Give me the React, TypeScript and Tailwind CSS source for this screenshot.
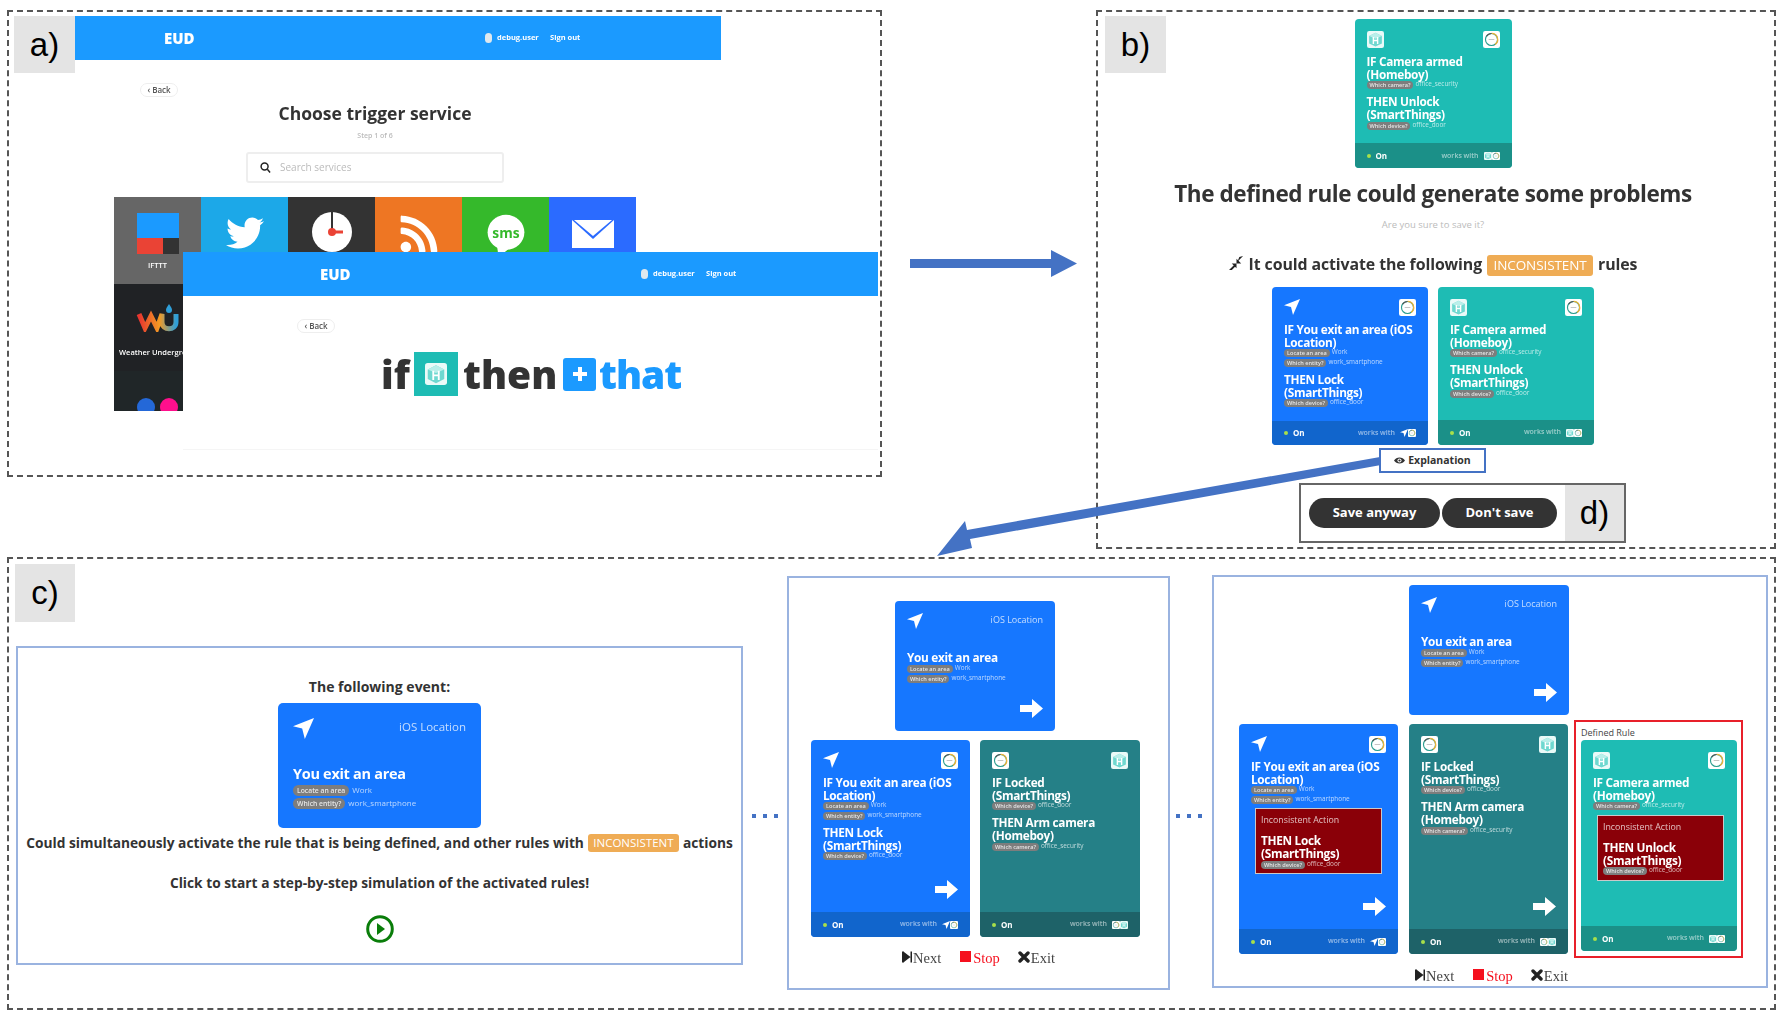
import React from 'react';
import { FaTwitter, FaRss } from 'react-icons/fa';

const LocationArrow: React.FC<{ className?: string }> = ({ className }) => (
  <svg viewBox="0 0 24 24" className={className}>
    <path d="M24 0 L0 9.5 L10.5 12 L13.5 24 Z" fill="#fff" />
  </svg>
);

// SmartThings style ring on a white tile
const RingIcon: React.FC<{ className?: string }> = ({ className }) => (
  <svg viewBox="0 0 24 24" className={className}>
    <rect width="24" height="24" rx="3" fill="#fff" />
    <circle cx="12" cy="12" r="8.5" fill="none" stroke="#2a9d8f" strokeWidth="1.6" />
    <path d="M12 3.5 A8.5 8.5 0 0 1 17 19" fill="none" stroke="#e8b23a" strokeWidth="1.8" />
    <path d="M5 7.5 A8.5 8.5 0 0 1 12 3.5" fill="none" stroke="#555" strokeWidth="1.6" />
    <rect x="8" y="11.4" width="8" height="1.2" fill="#bbb" />
  </svg>
);

// Homeboy cube logo
const CubeIcon: React.FC<{ className?: string }> = ({ className }) => (
  <svg viewBox="0 0 24 24" className={className}>
    <rect width="24" height="24" rx="3" fill="#eafaf8" />
    <path d="M12 2.5 L21 7 V17.5 L12 22 L3 17.5 V7 Z" fill="#6fd8d0" />
    <path d="M12 2.5 L21 7 L12 11 L3 7 Z" fill="#b9efea" />
    <path d="M8 8.5 H10 V12.5 H14 V8.5 H16 V18.5 H14 V14.5 H10 V18.5 H8 Z" fill="#fff" />
  </svg>
);

const ArrowRight: React.FC = () => (
  <svg viewBox="0 0 23 19" className="w-[23px] h-[19px]">
    <path d="M0 6 H12 V0 L23 9.5 L12 19 V13 H0 Z" fill="#fff" />
  </svg>
);

const Chip: React.FC<{ label: string; value: string }> = ({ label, value }) => (
  <div className="flex items-start h-[9.5px] whitespace-nowrap">
    <span className="h-[8px] mt-[1px] rounded-full bg-[#7d7d7d] px-[3px] text-[5.6px] leading-[8px] text-white/80 font-semibold">{label}</span>
    <span className="ml-[2px] text-[6.4px] leading-[8px] text-white/70">{value}</span>
  </div>
);

interface Block {
  lines: string[];
  params: [string, string][];
  inconsistent?: boolean;
}

const RuleBlock: React.FC<{ block: Block; first?: boolean }> = ({ block, first }) => {
  const body = (
    <>
      <div className="text-[11.8px] leading-[12.7px] tracking-[-0.3px] font-bold text-white">
        {block.lines.map(l => (
          <div key={l} className="whitespace-nowrap">{l}</div>
        ))}
      </div>
      <div>
        {block.params.map(p => (
          <Chip key={p[0]} label={p[0]} value={p[1]} />
        ))}
      </div>
    </>
  );
  if (block.inconsistent) {
    return (
      <div className="mt-[4px] ml-[4px] w-[127px] h-[66px] border border-[#c9c9c9] bg-[#8a0008] px-[5px] pt-[6px]">
        <div className="text-[8.8px] leading-[11px] text-white/75 mb-[8px]">Inconsistent Action</div>
        {body}
      </div>
    );
  }
  return <div className={first ? '' : 'mt-[5.5px]'}>{body}</div>;
};

const themes = {
  blue: { card: 'bg-[#1677ff]', foot: 'bg-[#1165cc]' },
  teal: { card: 'bg-[#1ebcb4]', foot: 'bg-[#1b9088]' },
  dark: { card: 'bg-[#258087]', foot: 'bg-[#1e6268]' },
};

type IconName = 'loc' | 'ring' | 'cube';

const TopIcon: React.FC<{ name: IconName }> = ({ name }) => {
  if (name === 'loc') return <LocationArrow className="w-[16px] h-[16px]" />;
  if (name === 'ring') return <RingIcon className="w-[17px] h-[17px]" />;
  return <CubeIcon className="w-[17px] h-[17px]" />;
};

const MiniIcon: React.FC<{ name: IconName }> = ({ name }) => {
  if (name === 'loc') return <LocationArrow className="w-[8px] h-[8px]" />;
  if (name === 'ring') return <RingIcon className="w-[8px] h-[8px]" />;
  return <CubeIcon className="w-[8px] h-[8px]" />;
};

const RuleCard: React.FC<{
  theme: keyof typeof themes;
  size: string;
  left: IconName;
  right: IconName;
  blocks: Block[];
  arrow?: boolean;
}> = ({ theme, size, left, right, blocks, arrow }) => (
  <div className={`${size} ${themes[theme].card} shrink-0 rounded-[4px] overflow-hidden flex flex-col blur-[0.35px]`}>
    <div className="flex-1 flex flex-col px-[12px] pt-[12px] pb-[13px]">
      <div className="flex justify-between h-[17px] mb-[7px]">
        <TopIcon name={left} />
        <TopIcon name={right} />
      </div>
      {blocks.map((b, i) => (
        <RuleBlock key={b.lines[0]} block={b} first={i === 0} />
      ))}
      {arrow && (
        <div className="mt-auto flex justify-end">
          <ArrowRight />
        </div>
      )}
    </div>
    <div className={`${themes[theme].foot} h-[25px] shrink-0 flex items-center justify-between px-[12px]`}>
      <div className="flex items-center gap-[5px]">
        <span className="w-[4px] h-[4px] rounded-full bg-[#a8e04a]" />
        <span className="text-[8px] font-bold text-white">On</span>
      </div>
      <div className="flex items-center gap-[5px]">
        <span className="text-[7px] text-white/55 font-semibold">works with</span>
        <div className="flex">
          <MiniIcon name={left} />
          <MiniIcon name={right} />
        </div>
      </div>
    </div>
  </div>
);

const camera: Block = { lines: ['IF Camera armed', '(Homeboy)'], params: [['Which camera?', 'office_security']] };
const unlock: Block = { lines: ['THEN Unlock', '(SmartThings)'], params: [['Which device?', 'office_door']] };
const exitArea: Block = {
  lines: ['IF You exit an area (iOS', 'Location)'],
  params: [['Locate an area', 'Work'], ['Which entity?', 'work_smartphone']],
};
const lock: Block = { lines: ['THEN Lock', '(SmartThings)'], params: [['Which device?', 'office_door']] };
const locked: Block = { lines: ['IF Locked', '(SmartThings)'], params: [['Which device?', 'office_door']] };
const arm: Block = { lines: ['THEN Arm camera', '(Homeboy)'], params: [['Which camera?', 'office_security']] };

// small event card, trigger only
const EventCard: React.FC = () => (
  <div className="w-[160px] h-[130px] shrink-0 bg-[#1677ff] rounded-[4px] flex flex-col px-[12px] pt-[12px] pb-[13px] blur-[0.35px]">
    <div className="flex justify-between items-start h-[17px]">
      <LocationArrow className="w-[16px] h-[16px]" />
      <span className="text-[9px] leading-[14px] text-white/75">iOS Location</span>
    </div>
    <div className="mt-[20px] text-[11.8px] leading-[14px] tracking-[-0.3px] font-bold text-white">You exit an area</div>
    <div>
      <Chip label="Locate an area" value="Work" />
      <Chip label="Which entity?" value="work_smartphone" />
    </div>
    <div className="mt-auto flex justify-end">
      <ArrowRight />
    </div>
  </div>
);

const BigChip: React.FC<{ label: string; value: string }> = ({ label, value }) => (
  <div className="flex items-start h-[13px] whitespace-nowrap">
    <span className="h-[11px] mt-[1px] rounded-full bg-[#7d7d7d] px-[4px] text-[6.8px] leading-[11px] text-white/80 font-semibold">{label}</span>
    <span className="ml-[3px] text-[8px] leading-[11px] font-normal text-white/70">{value}</span>
  </div>
);

const Badge: React.FC<{ className: string }> = ({ className }) => (
  <span className={`inline-flex items-center justify-center rounded-[3px] bg-[#efac55] text-white font-normal ${className}`}>INCONSISTENT</span>
);

const Nav: React.FC<{ className: string }> = ({ className }) => (
  <div className={`flex items-center h-[18px] font-['Liberation_Serif',serif] text-[14.5px] leading-[18px] blur-[0.25px] ${className}`}>
    <svg viewBox="0 0 10 11" className="w-[10px] h-[12px] mr-[1px] -mt-[3px]">
      <path d="M0 0 H2 V11 H0 Z M2 0.5 L8.5 5.5 L2 10.5 Z M8.5 0 H10 V11 H8.5 Z" fill="#222" />
    </svg>
    <span className="text-[#444]">Next</span>
    <span className="w-[11px] h-[11px] bg-[#f5101e] ml-[19px] mr-[2px] -mt-[3px]" />
    <span className="text-[#f5101e]">Stop</span>
    <svg viewBox="0 0 12 12" className="w-[12px] h-[12px] ml-[18px] mr-[1px] -mt-[3px]">
      <path d="M2 2 L10 10 M10 2 L2 10" stroke="#222" strokeWidth="3.4" strokeLinecap="round" />
    </svg>
    <span className="text-[#444]">Exit</span>
  </div>
);

const Dots: React.FC<{ className: string }> = ({ className }) => (
  <div className={`absolute flex gap-[7px] ${className}`}>
    <span className="w-[4px] h-[4px] bg-[#4472c4]" />
    <span className="w-[4px] h-[4px] bg-[#4472c4]" />
    <span className="w-[4px] h-[4px] bg-[#4472c4]" />
  </div>
);

const Tag: React.FC<{ text: string; className: string }> = ({ text, className }) => (
  <div className={`absolute bg-[#e4e4e4] flex items-center justify-center font-['Liberation_Sans',sans-serif] text-[33px] text-black ${className}`}>{text}</div>
);

const UserBlock: React.FC = () => (
  <div className="flex items-center text-[7.5px] font-bold text-white">
    <span className="w-[7px] h-[10px] rounded-full bg-[#dfe8ee] mr-[5px]" />
    <span className="w-[40px] whitespace-nowrap">debug.user</span>
    <span className="ml-[13px]">Sign out</span>
  </div>
);

const BackPill: React.FC<{ className: string }> = ({ className }) => (
  <div className={`w-[38px] h-[14px] rounded-full border border-[#eee] flex items-center justify-center text-[8px] font-semibold text-[#555] ${className}`}>
    ‹ Back
  </div>
);

const Tile: React.FC<{ color: string; label?: string; children: React.ReactNode }> = ({ color, label, children }) => (
  <div className={`${color} h-[87px] flex flex-col items-center overflow-hidden relative`}>
    {children}
    {label && <div className="absolute top-[63px] left-[5px] text-[7.5px] font-semibold text-white whitespace-nowrap">{label}</div>}
  </div>
);

const TileGrid: React.FC = () => (
  <div className="ml-[39px] mt-[14px] w-[522px] grid grid-cols-6">
    <Tile color="bg-[#666666]">
      <div className="mt-[16px] w-[42px] h-[41px] flex flex-col">
        <div className="h-[25px] bg-[#1b9aff]" />
        <div className="flex flex-1">
          <div className="w-[26px] bg-[#ea4335]" />
          <div className="flex-1 bg-[#333]" />
        </div>
      </div>
      <div className="mt-[6px] text-[7.5px] font-semibold text-white">IFTTT</div>
    </Tile>
    <Tile color="bg-[#1ca8e8]">
      <FaTwitter className="mt-[17px] text-white w-[42px] h-[38px]" />
    </Tile>
    <Tile color="bg-[#333333]">
      <svg viewBox="0 0 44 44" className="mt-[13px] w-[44px] h-[44px]">
        <circle cx="22" cy="22" r="20" fill="#fff" />
        <rect x="21" y="2" width="2" height="19" fill="#333" />
        <circle cx="22" cy="22" r="4" fill="#ea4335" />
        <rect x="22" y="20.5" width="11" height="3" fill="#ea4335" />
      </svg>
    </Tile>
    <Tile color="bg-[#ee7623]">
      <FaRss className="mt-[16px] text-white w-[42px] h-[42px]" />
    </Tile>
    <Tile color="bg-[#35b92b]">
      <svg viewBox="0 0 44 50" className="mt-[16px] w-[42px] h-[46px]">
        <ellipse cx="22" cy="21" rx="20" ry="19" fill="#fff" />
        <path d="M12 34 L14 48 L26 38 Z" fill="#fff" />
        <text x="22" y="27" textAnchor="middle" fontSize="15" fontWeight="700" fill="#35b92b" fontFamily="Open Sans, sans-serif">sms</text>
      </svg>
    </Tile>
    <Tile color="bg-[#2b6bff]">
      <svg viewBox="0 0 42 28" className="mt-[23px] w-[42px] h-[28px]">
        <rect width="42" height="28" fill="#fff" />
        <path d="M0 0 L21 19 L42 0" fill="#2b6bff" />
        <path d="M2 0 L21 16 L40 0 Z" fill="#fff" />
      </svg>
    </Tile>
    <Tile color="bg-[#202225]" label="Weather Underground">
      <svg viewBox="0 0 44 28" className="mt-[20px] w-[44px] h-[28px]">
        <defs>
          <linearGradient id="wu" x1="0" x2="1">
            <stop offset="0" stopColor="#e8352f" />
            <stop offset="0.55" stopColor="#f39a24" />
            <stop offset="1" stopColor="#2f9fd8" />
          </linearGradient>
        </defs>
        <path d="M3 10 L9 24 L15 12 L21 24 L26 10 V18 C26 27 40 27 40 18 V10" fill="none" stroke="url(#wu)" strokeWidth="5" />
        <path d="M33 0 C35 3 36 4 36 6 A3 3 0 0 1 30 6 C30 4 31 3 33 0 Z" fill="#2f9fd8" />
      </svg>
    </Tile>
    <div className="col-span-5" />
    <div className="h-[40px] bg-[#202628] flex justify-center gap-[5px] pt-[27px] overflow-hidden">
      <span className="w-[18px] h-[18px] rounded-full bg-[#2468d8] shrink-0" />
      <span className="w-[18px] h-[18px] rounded-full bg-[#ff0f8c] shrink-0" />
    </div>
  </div>
);

const App: React.FC = () => (
  <div className="relative w-[1785px] h-[1018px] bg-white overflow-hidden font-['Open_Sans','Noto_Sans',sans-serif] text-[#333]">
    {/* figure frames */}
    <div className="absolute left-[7px] top-[10px] w-[875px] h-[467px] border-2 border-dashed border-[#555]" />
    <div className="absolute left-[1096px] top-[10px] w-[680px] h-[539px] border-2 border-dashed border-[#555]" />
    <div className="absolute left-[7px] top-[557px] w-[1769px] h-[453px] border-2 border-dashed border-[#555]" />

    {/* a) first screen */}
    <div className="absolute left-[75px] top-[16px] w-[646px] blur-[0.4px]">
      <div className="h-[44px] bg-[#1b9aff] flex items-center">
        <div className="ml-[89px] w-[321px] text-[15px] font-extrabold text-white">EUD</div>
        <UserBlock />
      </div>
      <BackPill className="ml-[65px] mt-[23px]" />
      <div className="ml-[39px] w-[522px] flex flex-col items-center">
        <h1 className="mt-[5px] text-[17.5px] leading-[22px] font-bold text-[#333]">Choose trigger service</h1>
        <div className="mt-[7px] text-[7px] leading-[10px] font-semibold text-[#bbb]">Step 1 of 6</div>
        <div className="mt-[11px] w-[258px] h-[31px] rounded-[3px] border-[2px] border-[#eee] flex items-center pl-[12px] text-[10px] text-[#bbb]">
          <svg viewBox="0 0 12 12" className="w-[11px] h-[11px] mr-[9px]">
            <circle cx="5" cy="5" r="3.8" fill="none" stroke="#222" strokeWidth="1.6" />
            <path d="M8 8 L11 11.5" stroke="#222" strokeWidth="1.6" />
          </svg>
          Search services
        </div>
      </div>
      <TileGrid />
    </div>

    {/* a) second screen on top */}
    <div className="absolute left-[183px] top-[252px] w-[695px] h-[198px] bg-white border-b border-[#f5f5f5] blur-[0.4px]">
      <div className="h-[44px] bg-[#1b9aff] flex items-center">
        <div className="ml-[137px] w-[321px] text-[15px] font-extrabold text-white">EUD</div>
        <UserBlock />
      </div>
      <BackPill className="ml-[114px] mt-[23px]" />
      <div className="ml-[198px] mt-[19px] flex items-center h-[44px] text-[39px] leading-[44px] font-extrabold text-[#333]">
        <span className="w-[33px]">if</span>
        <div className="w-[44px] h-[44px] bg-[#1ebcb4] flex items-center justify-center">
          <CubeIcon className="w-[22px] h-[22px]" />
        </div>
        <span className="ml-[5px] w-[100px]">then</span>
        <div className="w-[33px] h-[33px] rounded-[3px] bg-[#1b9aff] flex items-center justify-center">
          <svg viewBox="0 0 16 16" className="w-[16px] h-[16px]">
            <path d="M6 1 H10 V6 H15 V10 H10 V15 H6 V10 H1 V6 H6 Z" fill="#fff" />
          </svg>
        </div>
        <span className="ml-[3px] text-[#1b9aff] tracking-[-1px]">that</span>
      </div>
    </div>

    <Tag text="a)" className="left-[14px] top-[16px] w-[61px] h-[57px]" />

    {/* arrows between panes */}
    <svg viewBox="0 0 167 27" className="absolute left-[910px] top-[250px] w-[167px] h-[27px]">
      <path d="M0 9 H141 V0 L167 13.5 L141 27 V18 H0 Z" fill="#4472c4" />
    </svg>
    <svg viewBox="0 0 450 110" className="absolute left-[935px] top-[452px] w-[450px] h-[110px] z-10">
      <path d="M445 5 L446 13 L35 87 L37 96 L2 104 L30 69 L32 78 Z" fill="#4472c4" />
    </svg>

    {/* b) warning */}
    <Tag text="b)" className="left-[1105px] top-[16px] w-[61px] h-[57px]" />
    <div className="absolute left-[1176px] top-[19px] w-[514px] flex flex-col items-center">
      <RuleCard theme="teal" size="w-[157px] h-[149px]" left="cube" right="ring" blocks={[camera, unlock]} />
      <h2 className="mt-[13px] text-[22.5px] leading-[26px] tracking-[-0.4px] font-bold text-[#333] whitespace-nowrap blur-[0.3px]">The defined rule could generate some problems</h2>
      <div className="mt-[11px] text-[9.5px] leading-[14px] text-[#bbb]">Are you sure to save it?</div>
      <div className="mt-[21px] flex items-center h-[24px] text-[15.9px] tracking-[-0.1px] font-bold whitespace-nowrap blur-[0.3px]">
        <svg viewBox="0 0 16 16" className="w-[15px] h-[15px] mr-[5px] -mt-[3px]">
          <path d="M15 0 L9 6 L11 1 Z M0 15 L6 9 L7 11 L3 15 Z M8 3 L13 8 L8 8 Z M3 8 L8 8 L8 13 Z" fill="#222" />
        </svg>
        It could activate the following
        <Badge className="mx-[5px] w-[106px] h-[21px] text-[13.5px]" />
        rules
      </div>
      <div className="mt-[10px] flex gap-[10px]">
        <RuleCard theme="blue" size="w-[156px] h-[158px]" left="loc" right="ring" blocks={[exitArea, lock]} />
        <RuleCard theme="teal" size="w-[156px] h-[158px]" left="cube" right="ring" blocks={[camera, unlock]} />
      </div>
    </div>

    <div className="absolute left-[1379px] top-[448px] w-[107px] h-[25px] bg-white border-2 border-[#4472c4] flex items-center justify-center text-[10.5px] font-bold text-[#333] z-20">
      <svg viewBox="0 0 14 10" className="w-[11px] h-[9px] mr-[3px]">
        <path d="M0 5 C3 0 11 0 14 5 C11 10 3 10 0 5 Z" fill="#333" />
        <circle cx="7" cy="5" r="2.6" fill="#fff" />
        <circle cx="7" cy="5" r="1.4" fill="#333" />
      </svg>
      Explanation
    </div>

    {/* d) buttons */}
    <div className="absolute left-[1299px] top-[483px] w-[327px] h-[60px] border-2 border-[#666] bg-white flex items-center pl-[8px]">
      <div className="w-[131px] h-[30px] rounded-full bg-[#333] flex items-center justify-center text-[13px] font-bold text-white">Save anyway</div>
      <div className="ml-[2px] w-[115px] h-[30px] rounded-full bg-[#333] flex items-center justify-center text-[13px] font-bold text-white">Don't save</div>
      <div className="ml-[8px] flex-1 h-full bg-[#e4e4e4] flex items-center justify-center font-['Liberation_Sans',sans-serif] text-[33px] text-black">d)</div>
    </div>

    {/* c) explanation steps */}
    <Tag text="c)" className="left-[15px] top-[564px] w-[60px] h-[58px]" />

    <div className="absolute left-[16px] top-[646px] w-[727px] h-[319px] border-2 border-[#9ab3e0] flex flex-col items-center pt-[29px] text-[13.75px] leading-[20px] font-bold text-[#333]">
      <div className="text-[14px]">The following event:</div>
      <div className="mt-[6px] w-[203px] h-[125px] rounded-[5px] bg-[#1677ff] flex flex-col px-[15px] pt-[15px] blur-[0.3px]">
        <div className="flex justify-between items-start h-[21px]">
          <LocationArrow className="w-[21px] h-[21px]" />
          <span className="text-[11.5px] leading-[18px] font-normal text-white/75">iOS Location</span>
        </div>
        <div className="mt-[25px] text-[14.5px] leading-[20px] tracking-[-0.3px] text-white">You exit an area</div>
        <BigChip label="Locate an area" value="Work" />
        <BigChip label="Which entity?" value="work_smartphone" />
      </div>
      <div className="mt-[5px] flex items-center whitespace-nowrap">
        Could simultaneously activate the rule that is being defined, and other rules with
        <Badge className="mx-[4px] w-[91px] h-[18px] text-[11.5px]" />
        actions
      </div>
      <div className="mt-[20px]">Click to start a step-by-step simulation of the activated rules!</div>
      <svg viewBox="0 0 28 28" className="mt-[22px] w-[28px] h-[28px]">
        <circle cx="14" cy="14" r="12.3" fill="none" stroke="#0a7d0a" strokeWidth="3" />
        <path d="M11 8 L19 14 L11 20 Z" fill="#0a7d0a" />
      </svg>
    </div>

    <Dots className="left-[752px] top-[814px]" />

    <div className="absolute left-[787px] top-[576px] w-[383px] h-[414px] border-2 border-[#9ab3e0] pl-[22px] pt-[23px]">
      <div className="ml-[84px]">
        <EventCard />
      </div>
      <div className="mt-[9px] flex gap-[10px]">
        <RuleCard theme="blue" size="w-[159px] h-[197px]" left="loc" right="ring" blocks={[exitArea, lock]} arrow />
        <RuleCard theme="dark" size="w-[160px] h-[197px]" left="ring" right="cube" blocks={[locked, arm]} />
      </div>
      <Nav className="mt-[12px] ml-[91px]" />
    </div>

    <Dots className="left-[1176px] top-[814px]" />

    <div className="absolute left-[1212px] top-[575px] w-[556px] h-[413px] border-2 border-[#9ab3e0] pl-[25px] pt-[8px]">
      <div className="ml-[170px]">
        <EventCard />
      </div>
      <div className="mt-[9px] flex gap-[11px] h-[230px]">
        <RuleCard
          theme="blue"
          size="w-[159px] h-[230px]"
          left="loc"
          right="ring"
          blocks={[exitArea, { ...lock, inconsistent: true }]}
          arrow
        />
        <RuleCard theme="dark" size="w-[159px] h-[230px]" left="ring" right="cube" blocks={[locked, arm]} arrow />
        <div className="-ml-[5px] -mt-[4px] w-[169px] h-[238px] border-2 border-[#e8202a] px-[5px] pt-[3px] shrink-0">
          <div className="h-[15px] text-[9px] leading-[15px] text-[#444]">Defined Rule</div>
          <RuleCard
            theme="teal"
            size="w-[156px] h-[211px]"
            left="cube"
            right="ring"
            blocks={[camera, { ...unlock, inconsistent: true }]}
          />
        </div>
      </div>
      <Nav className="mt-[13px] ml-[176px]" />
    </div>
  </div>
);

export default App;
